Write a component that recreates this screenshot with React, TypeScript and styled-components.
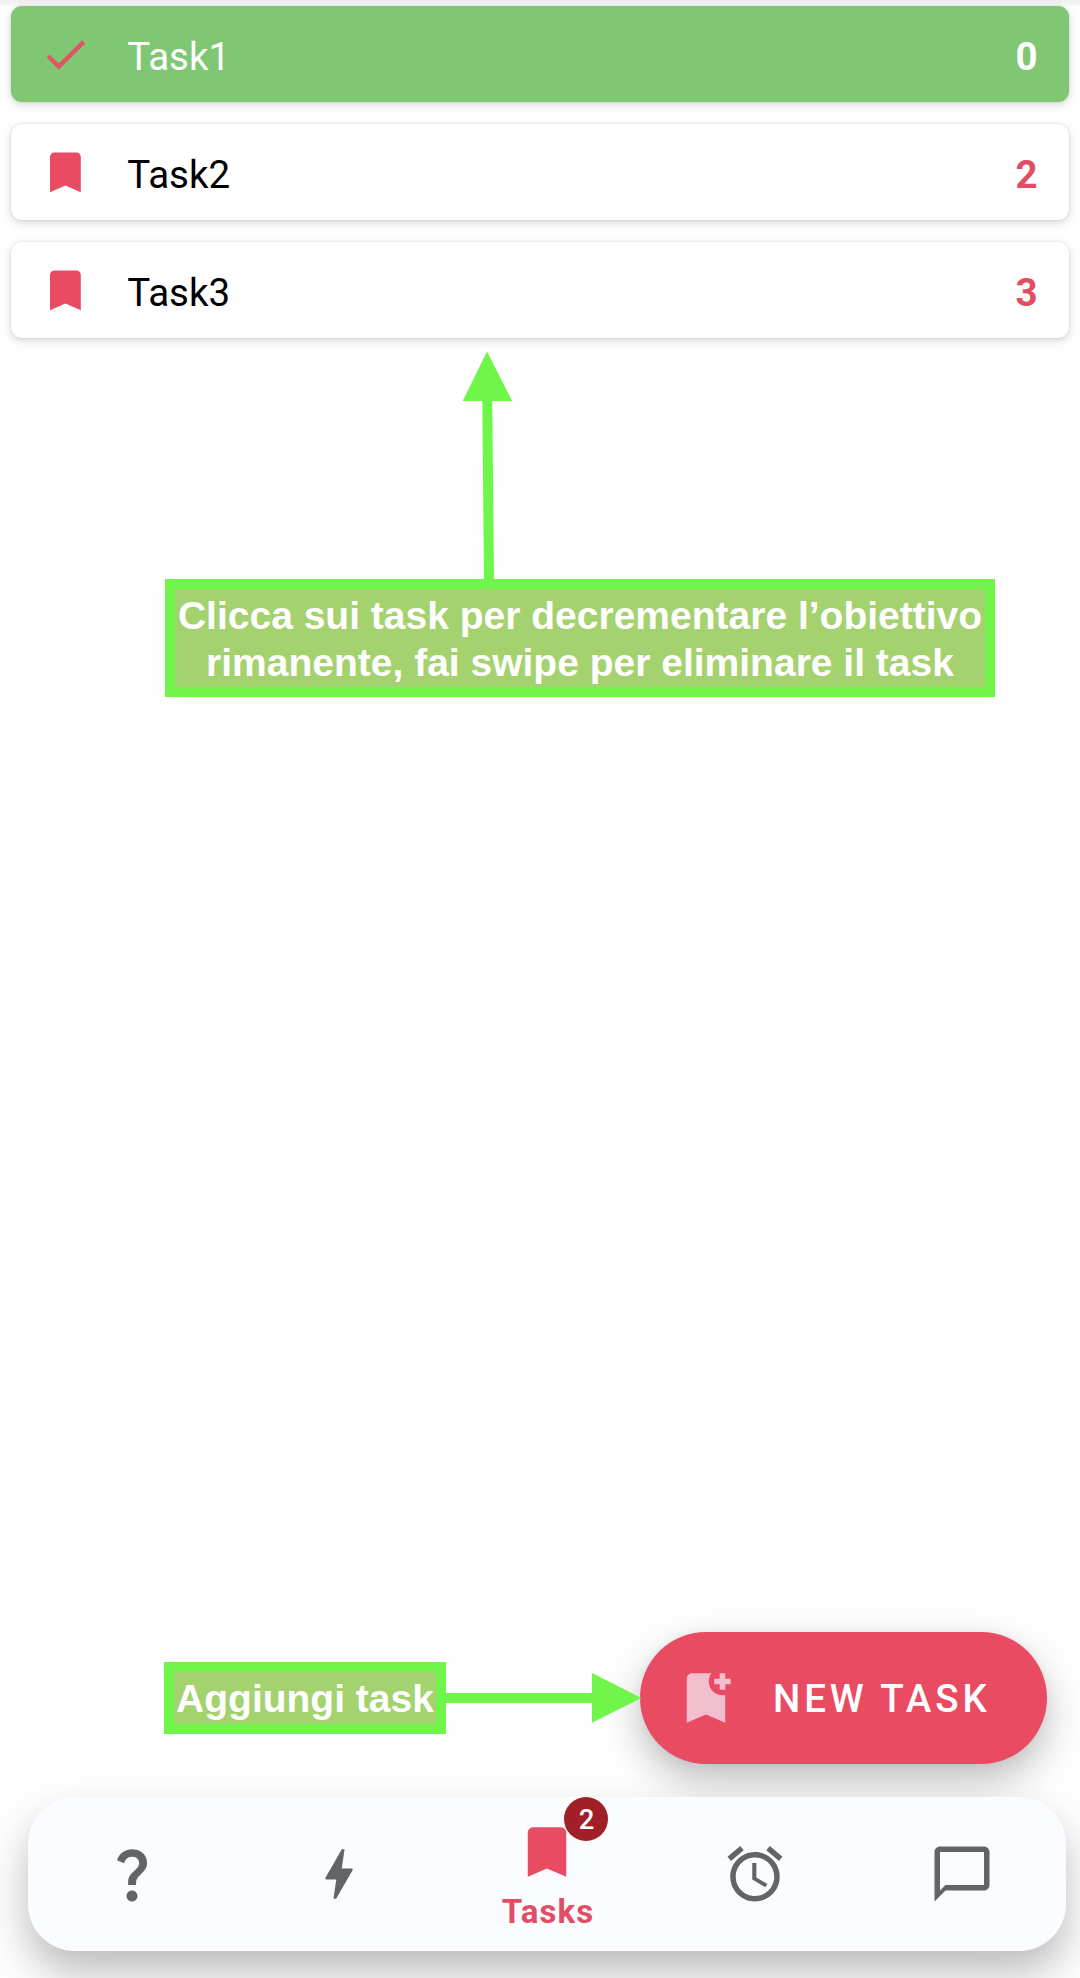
import React from "react";
import styled, { createGlobalStyle } from "styled-components";

const RED = "#e94b62";
const LIME = "#70f64b";

const GlobalStyle = createGlobalStyle`
  body {
    margin: 0;
    background: #fefefe;
    font-family: Roboto, sans-serif;
  }
  * { box-sizing: border-box; }
`;

const Screen = styled.div`
  position: relative;
  width: 1080px;
  height: 1978px;
  overflow: hidden;
  display: flex;
  flex-direction: column;
  background: linear-gradient(#f0f0f0 0, #f2f2f2 3px, #fefefe 7px);
`;

const TaskList = styled.main`
  flex: 1;
  display: flex;
  flex-direction: column;
  gap: 22px;
  padding: 6px 11px 0;
`;

const TaskCard = styled.button<{ $done?: boolean }>`
  display: flex;
  align-items: center;
  height: 96px;
  padding: 0 31.5px 0 28px;
  border: 0;
  border-radius: 11px;
  background: ${(p) => (p.$done ? "#7fc772" : "#ffffff")};
  color: ${(p) => (p.$done ? "#ffffff" : "#000000")};
  box-shadow: 0 0 3px rgba(0, 0, 0, 0.12), 0 3px 8px rgba(0, 0, 0, 0.14);
  font: 400 38.5px/46px Roboto, sans-serif;
  text-align: left;
`;

const TaskName = styled.span`
  flex: 1;
  margin-left: 35.5px;
  padding-top: 5px;
`;

const TaskCount = styled.span<{ $done?: boolean }>`
  padding-top: 5px;
  font-weight: 700;
  color: ${(p) => (p.$done ? "#ffffff" : "#e24d66")};
`;

const Icon = styled.svg<{ $size: number; $color: string }>`
  display: block;
  flex: none;
  width: ${(p) => p.$size}px;
  height: ${(p) => p.$size}px;
  fill: ${(p) => p.$color};
`;

const ActionRow = styled.div`
  display: flex;
  justify-content: flex-end;
  padding: 0 33px 33px 0;
`;

const NewTaskButton = styled.button`
  display: flex;
  align-items: center;
  gap: 34px;
  width: 407px;
  height: 132px;
  padding: 0 0 0 33px;
  border: 0;
  border-radius: 66px;
  background: ${RED};
  color: #ffffff;
  box-shadow: 0 0 12px rgba(0, 0, 0, 0.04), 0 17px 38px rgba(0, 0, 0, 0.25);
  font: 500 38.5px/46px Roboto, sans-serif;
  letter-spacing: 3.9px;
  white-space: nowrap;
`;

const ButtonText = styled.span`
  padding-top: 2px;
`;

const NavBar = styled.nav`
  position: relative;
  display: flex;
  flex: none;
  width: 1038px;
  height: 154px;
  margin: 0 0 27px 28px;
  border-radius: 47px;
  background: #fbfcff;
  box-shadow: 0 22px 42px rgba(0, 0, 0, 0.26);
`;

const NavItem = styled.button<{ $active?: boolean }>`
  flex: 1;
  display: flex;
  flex-direction: column;
  align-items: center;
  justify-content: ${(p) => (p.$active ? "flex-start" : "center")};
  padding: ${(p) => (p.$active ? "22px 0 0" : "0")};
  border: 0;
  background: none;
`;

const NavIcon = styled.span`
  position: relative;
`;

const NavLabel = styled.span`
  margin-top: 7px;
  padding-left: 2px;
  color: #e24d66;
  font: 700 33px/39px Roboto, sans-serif;
  letter-spacing: 1.1px;
`;

const Badge = styled.span`
  position: absolute;
  left: 50px;
  top: -22px;
  width: 44px;
  height: 44px;
  border-radius: 50%;
  background: #a01f28;
  color: #ffffff;
  font: 500 27.5px/45px Roboto, sans-serif;
  padding-left: 1px;
  text-align: center;
`;

const Callout = styled.div<{ $x: number; $y: number; $w: number; $h: number; $drop?: number }>`
  position: absolute;
  left: ${(p) => p.$x}px;
  top: ${(p) => p.$y}px;
  width: ${(p) => p.$w}px;
  height: ${(p) => p.$h}px;
  padding-top: ${(p) => p.$drop ?? 0}px;
  display: flex;
  align-items: center;
  justify-content: center;
  border: 10px solid ${LIME};
  background: #a3d26f;
  color: #ffffff;
  font: 700 39px/47px "Liberation Sans", Arial, sans-serif;
  text-align: center;
  white-space: nowrap;
`;

const Arrows = styled.svg`
  position: absolute;
  inset: 0;
  width: 1080px;
  height: 1978px;
  fill: ${LIME};
  pointer-events: none;
`;

const paths = {
  check: "M9 16.17 4.83 12l-1.42 1.41L9 19 21 7l-1.41-1.41z",
  bookmark: "M17 3H7c-1.1 0-2 .9-2 2v16l7-3 7 3V5c0-1.1-.9-2-2-2z",
  bookmarkAdd:
    "M21 7h-2v2h-2V7h-2V5h2V3h2v2h2v2zM19 21l-7-3-7 3V5c0-1.1.9-2 2-2h7c-.63.84-1 1.87-1 3 0 2.76 2.24 5 5 5 .34 0 .68-.03 1-.1V21z",
  help: "M11.07 12.85c.77-1.39 2.25-2.21 3.11-3.44.91-1.29.4-3.7-2.18-3.7-1.69 0-2.52 1.28-2.87 2.34L6.54 6.96C7.25 4.83 9.18 3 11.99 3c2.35 0 3.96 1.07 4.78 2.41.7 1.15 1.11 3.3.03 4.9-1.2 1.77-2.35 2.31-2.97 3.45-.25.46-.35.76-.35 2.24h-2.89c-.01-.78-.13-2.05.48-3.15zM14 20c0 1.1-.9 2-2 2s-2-.9-2-2 .9-2 2-2 2 .9 2 2z",
  bolt: "M11 21h-1l1-7H7.5c-.88 0-.33-.75-.31-.78C8.48 10.94 10.42 7.54 13.01 3h1l-1 7h3.51c.4 0 .62.19.4.66C12.97 17.55 11 21 11 21z",
  alarm:
    "M22 5.72l-4.6-3.86-1.29 1.53 4.6 3.86L22 5.72zM7.88 3.39L6.6 1.86 2 5.71l1.29 1.53 4.59-3.85zM12.5 8H11v6l4.75 2.85.75-1.23-4-2.37V8zM12 4c-4.97 0-9 4.03-9 9s4.02 9 9 9c4.97 0 9-4.03 9-9s-4.03-9-9-9zm0 16c-3.87 0-7-3.13-7-7s3.13-7 7-7 7 3.13 7 7-3.13 7-7 7z",
  chat: "M20 2H4c-1.1 0-2 .9-2 2v18l4-4h14c1.1 0 2-.9 2-2V4c0-1.1-.9-2-2-2zm0 14H6l-2 2V4h16v12z",
};

type Glyph = keyof typeof paths;

function MaterialIcon({ name, size, color }: { name: Glyph; size: number; color: string }) {
  return (
    <Icon viewBox="0 0 24 24" $size={size} $color={color} aria-hidden="true">
      <path d={paths[name]} />
    </Icon>
  );
}

const tasks = [
  { name: "Task1", left: 0 },
  { name: "Task2", left: 2 },
  { name: "Task3", left: 3 },
];

const navItems: { icon: Glyph; label?: string; badge?: number }[] = [
  { icon: "help" },
  { icon: "bolt" },
  { icon: "bookmark", label: "Tasks", badge: 2 },
  { icon: "alarm" },
  { icon: "chat" },
];

export default function App() {
  return (
    <>
      <GlobalStyle />
      <Screen>
        <TaskList>
          {tasks.map((t) => {
            const done = t.left === 0;
            return (
              <TaskCard key={t.name} $done={done}>
                <MaterialIcon name={done ? "check" : "bookmark"} size={52.8} color={done ? "#df5561" : RED} />
                <TaskName>{t.name}</TaskName>
                <TaskCount $done={done}>{t.left}</TaskCount>
              </TaskCard>
            );
          })}
        </TaskList>
        <ActionRow>
          <NewTaskButton>
            <MaterialIcon name="bookmarkAdd" size={66} color="#f3bfce" />
            <ButtonText>NEW TASK</ButtonText>
          </NewTaskButton>
        </ActionRow>
        <NavBar>
          {navItems.map((item) => (
            <NavItem key={item.icon} $active={!!item.label}>
              <NavIcon>
                <MaterialIcon name={item.icon} size={66} color={item.label ? RED : "#636466"} />
                {item.badge && <Badge>{item.badge}</Badge>}
              </NavIcon>
              {item.label && <NavLabel>{item.label}</NavLabel>}
            </NavItem>
          ))}
        </NavBar>
        <Callout $x={165} $y={579} $w={830} $h={118} $drop={2}>
          Clicca sui task per decrementare l’obiettivo
          <br />
          rimanente, fai swipe per eliminare il task
        </Callout>
        <Callout $x={164} $y={1662} $w={282} $h={72}>
          Aggiungi task
        </Callout>
        <Arrows viewBox="0 0 1080 1978" aria-hidden="true">
          <path d="M487 351.500 512.200 401H492.200L494 580H484L482.300 401H462.700z" />
          <path d="M445 1693H592V1673L641.500 1698 592 1722.700V1703H445z" />
        </Arrows>
      </Screen>
    </>
  );
}
